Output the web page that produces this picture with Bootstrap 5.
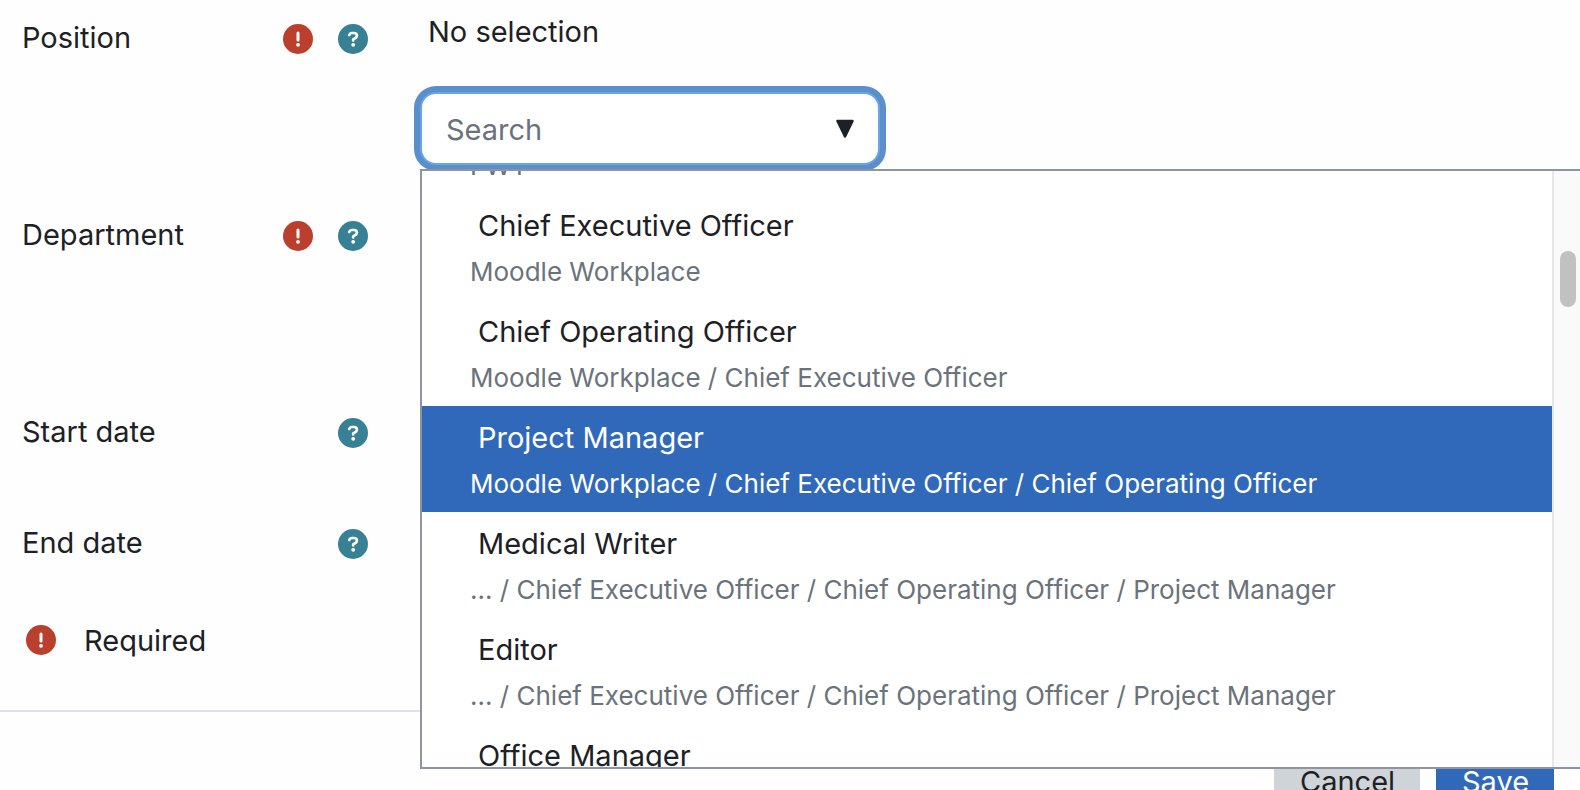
<!DOCTYPE html>
<html lang="en">
<head>
<meta charset="utf-8">
<meta name="viewport" content="width=device-width, initial-scale=1">
<title>Job assignment</title>
<link href="https://cdn.jsdelivr.net/npm/bootstrap@5.3.0/dist/css/bootstrap.min.css" rel="stylesheet">
<style>
  body { font-family: Inter, "Liberation Sans", sans-serif; font-size: 29px; line-height: 45px; color: #1d2125; background: #fefefe; height: 100vh; overflow: hidden; }
  .field-row { min-height: 197px; }
  .field-row.date-row { min-height: 111px; }
  .field-label { padding: 15px 27px 0 22px; }
  .field-label label, .field-label .caption { flex-grow: 1; }
  .field-label .marks { display: flex; gap: 25px; height: 47px; align-items: center; }
  .field-body { padding: 9px 0 0 25px; }
  .current { padding-left: 8px; height: 83px; }
  .mark-icon { width: 30px; height: 30px; display: block; }
  .help-btn { border: 0; padding: 0; background: none; }
  .search-box { width: 460px; }
  .search-box .form-control { height: 73px; font-size: 29px; line-height: 45px; padding: 13px 60px 11px 24px; border: 2px solid #6aa5ea; border-radius: 16px; color: #1d2125; background: #fff; box-shadow: 0 0 0 6px #5b8fcb; }
  .search-box .form-control::placeholder { color: #6a737b; opacity: 1; }
  .search-box .toggle { position: absolute; right: 26px; top: 27px; border: 0; padding: 0; background: none; line-height: 0; }
  .suggestions { position: absolute; top: 77px; left: 0; right: -2px; height: 600px; border: 2px solid #8f959e; background: #fff; overflow: hidden; z-index: 5; }
  .options { margin: -83px 0 0; padding: 0; list-style: none; flex-grow: 1; min-width: 0; }
  .options li { height: 106px; padding: 9px 0 0 48px; white-space: nowrap; }
  .options .title { display: block; padding-left: 8px; height: 46px; }
  .options .path { display: block; font-size: 26px; color: #6a737b; }
  .options .chosen { background: #3069ba; }
  .options .chosen, .options .chosen .path { color: #fff; }
  .track { flex: none; width: 28px; border-left: 2px solid #e7e7e7; background: #fafafa; padding: 80px 0 0 6px; }
  .thumb { width: 16px; height: 56px; border-radius: 8px; background: #c1c1c1; }
  .required-note { padding: 2px 26px 0; gap: 28px; height: 94px; }
  .required-mark { height: 43px; }
  .form-footer { border-top: 2px solid #dee2e6; padding: 34px 26px 0 0; gap: 16px; }
  .form-footer .btn { font-size: 29px; line-height: 45px; padding: 11px 24px; border-width: 2px; border-radius: 0; }
  .btn-cancel { background: #ced4d8; color: #1d2125; width: 146px; }
  .btn-save { background: #3069ba; color: #fff; width: 118px; }
</style>
<script src="https://cdn.jsdelivr.net/npm/bootstrap@5.3.0/dist/js/bootstrap.bundle.min.js"></script>
</head>
<body>
<svg class="d-none" aria-hidden="true">
  <symbol id="req" viewBox="0 0 30 30"><circle cx="15" cy="15" r="15" fill="#bb3f2d"/><path d="M15 9.1v7" stroke="#fff" stroke-width="3" stroke-linecap="round"/><circle cx="15" cy="20.8" r="1.9" fill="#fff"/></symbol>
  <symbol id="help" viewBox="0 0 30 30"><circle cx="15" cy="15" r="15" fill="#388094"/><path d="M11.2 10.9c.5-1.3 1.4-1.9 2.6-1.9h2.1c1.7 0 3 1.1 3 2.6 0 1.2-.6 1.9-1.6 2.5L15.2 15.3v1.2" fill="none" stroke="#fff" stroke-width="2.7" stroke-linecap="round" stroke-linejoin="round"/><circle cx="15.2" cy="20.8" r="1.9" fill="#fff"/></symbol>
</svg>
<form class="container-fluid p-0" onsubmit="return false">
  <div class="row g-0 field-row">
    <div class="col-3 field-label d-flex align-items-start">
      <label for="position">Position</label>
      <div class="marks">
        <svg class="mark-icon" role="img" aria-label="Required"><use href="#req"/></svg>
        <button type="button" class="help-btn" aria-label="Help with Position"><svg class="mark-icon"><use href="#help"/></svg></button>
      </div>
    </div>
    <div class="col-9 field-body">
      <div class="current">No selection</div>
      <div class="position-relative">
        <div class="search-box position-relative">
          <input id="position" type="text" class="form-control" placeholder="Search" role="combobox" aria-expanded="true" aria-controls="position-list" autocomplete="off">
          <button type="button" class="toggle" aria-label="Show suggestions"><svg width="18" height="20" viewBox="0 0 18 20"><path d="M1.5 2h15L9 17.5z" fill="#1d2125" stroke="#1d2125" stroke-width="2.5" stroke-linejoin="round"/></svg></button>
        </div>
        <div class="suggestions d-flex">
          <ul class="options" id="position-list" role="listbox" aria-label="Position">
            <li role="option"><span class="title"></span><span class="path">FWT</span></li>
            <li role="option"><span class="title">Chief Executive Officer</span><span class="path">Moodle Workplace</span></li>
            <li role="option"><span class="title">Chief Operating Officer</span><span class="path">Moodle Workplace / Chief Executive Officer</span></li>
            <li role="option" class="chosen" aria-selected="true"><span class="title">Project Manager</span><span class="path">Moodle Workplace / Chief Executive Officer / Chief Operating Officer</span></li>
            <li role="option"><span class="title">Medical Writer</span><span class="path">... / Chief Executive Officer / Chief Operating Officer / Project Manager</span></li>
            <li role="option"><span class="title">Editor</span><span class="path">... / Chief Executive Officer / Chief Operating Officer / Project Manager</span></li>
            <li role="option"><span class="title">Office Manager</span></li>
          </ul>
          <div class="track" aria-hidden="true"><div class="thumb"></div></div>
        </div>
      </div>
    </div>
  </div>
  <div class="row g-0 field-row">
    <div class="col-3 field-label d-flex align-items-start">
      <span class="caption">Department</span>
      <div class="marks">
        <svg class="mark-icon" role="img" aria-label="Required"><use href="#req"/></svg>
        <button type="button" class="help-btn" aria-label="Help with Department"><svg class="mark-icon"><use href="#help"/></svg></button>
      </div>
    </div>
  </div>
  <div class="row g-0 field-row date-row">
    <div class="col-3 field-label d-flex align-items-start">
      <span class="caption">Start date</span>
      <div class="marks"><button type="button" class="help-btn" aria-label="Help with Start date"><svg class="mark-icon"><use href="#help"/></svg></button></div>
    </div>
  </div>
  <div class="row g-0 field-row date-row">
    <div class="col-3 field-label d-flex align-items-start">
      <span class="caption">End date</span>
      <div class="marks"><button type="button" class="help-btn" aria-label="Help with End date"><svg class="mark-icon"><use href="#help"/></svg></button></div>
    </div>
  </div>
  <div class="required-note d-flex align-items-start">
    <div class="required-mark d-flex align-items-center"><svg class="mark-icon" aria-hidden="true"><use href="#req"/></svg></div>
    <span>Required</span>
  </div>
  <div class="form-footer d-flex justify-content-end">
    <button type="button" class="btn btn-cancel">Cancel</button>
    <button type="submit" class="btn btn-save">Save</button>
  </div>
</form>
</body>
</html>
